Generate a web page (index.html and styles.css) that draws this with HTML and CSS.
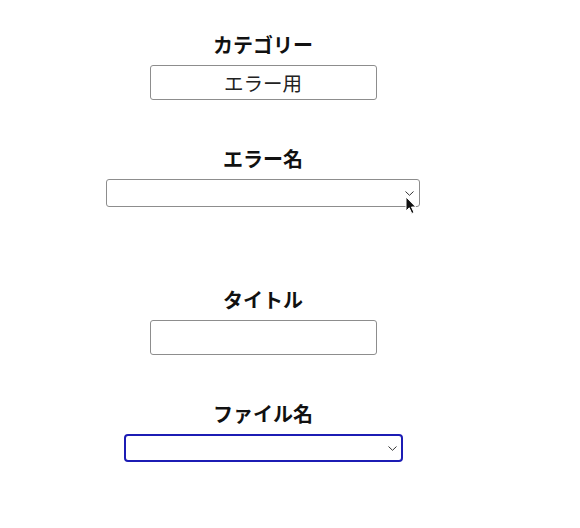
FILE: index.html
```html
<!DOCTYPE html>
<html lang="ja">
<head>
<meta charset="utf-8">
<link rel="stylesheet" href="styles.css">
</head>
<body>
<form class="form">
  <div class="field">
    <label class="label">カテゴリー</label>
    <input class="text-input" type="text" value="エラー用">
  </div>
  <div class="field field--wide-gap">
    <label class="label">エラー名</label>
    <div class="select-wrap">
      <select class="select select--wide"><option></option></select>
      <svg class="cursor" width="13" height="19" viewBox="0 0 13 19"><path d="M1 1 L1 15 L4.2 11.8 L6.8 17.5 L9 16.5 L6.5 11 L10.8 11 Z" fill="#111" stroke="#fff" stroke-width="1"/></svg>
    </div>
  </div>
  <div class="field">
    <label class="label">タイトル</label>
    <input class="text-input" type="text" value="">
  </div>
  <div class="field">
    <label class="label">ファイル名</label>
    <select class="select select--mid select--focus"><option></option></select>
  </div>
</form>
</body>
</html>
```
FILE: styles.css
```css
html, body {
  background: #ffffff;
}
body {
  margin: 8px;
  font-family: "Noto Sans CJK JP", "Noto Sans", sans-serif;
  color: #111;
}
.form {
  width: 510px;
  padding-top: 22px;
  display: flex;
  flex-direction: column;
  align-items: center;
}
.field {
  display: flex;
  flex-direction: column;
  align-items: center;
  gap: 6px;
  margin-bottom: 44px;
}
.field--wide-gap {
  margin-bottom: 78px;
}
.label {
  font-size: 20px;
  line-height: 29px;
  font-weight: 700;
  color: #111;
}
.text-input {
  box-sizing: border-box;
  display: block;
  width: 227px;
  height: 35px;
  border: 1px solid #8d8d8d;
  border-radius: 3px;
  background: #fff;
  font-family: "Noto Sans CJK JP", sans-serif;
  font-size: 19.5px;
  color: #222;
  text-align: center;
  padding: 0 4px;
  margin: 0;
}
.select-wrap {
  position: relative;
}
.select {
  box-sizing: border-box;
  display: block;
  height: 28px;
  border: 1px solid #8d8d8d;
  border-radius: 3px;
  margin: 0;
  font-size: 13px;
  -webkit-appearance: none;
  appearance: none;
  background: #fff url("data:image/svg+xml;utf8,<svg xmlns='http://www.w3.org/2000/svg' width='9' height='5' viewBox='0 0 9 5'><path d='M0.5 0.5 L4.5 4.3 L8.5 0.5' fill='none' stroke='%23333' stroke-width='1'/></svg>") no-repeat right 5px center / 9px 5px;
}
.select--wide {
  width: 314px;
}
.select--mid {
  width: 279px;
}
.select--focus {
  border: 2px solid #1c1cb4;
  border-radius: 4px;
  outline: none;
  background-position: right 4px center;
}
.cursor {
  position: absolute;
  left: 299px;
  top: 17px;
}
```
